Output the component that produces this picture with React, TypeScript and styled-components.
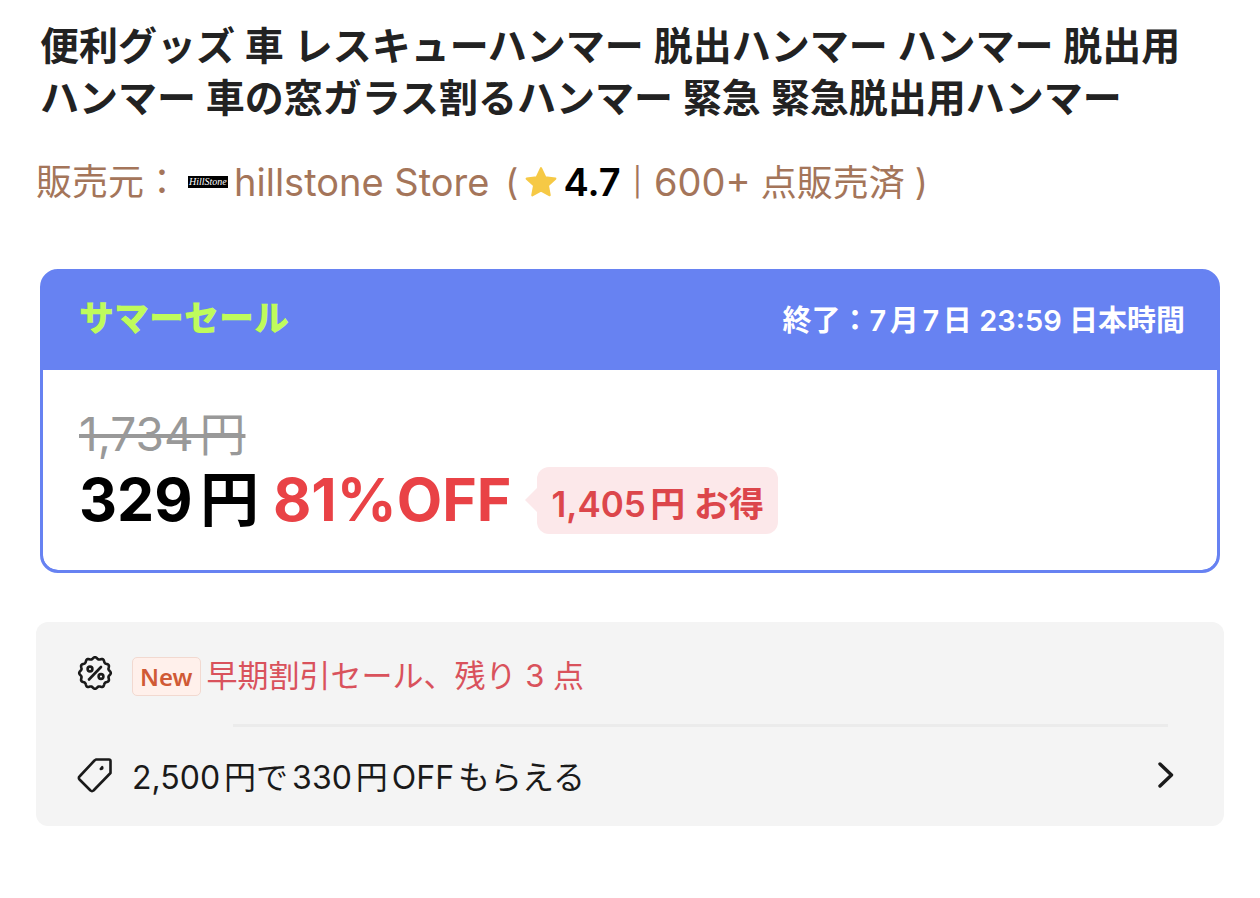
import React from "react";
import styled, { createGlobalStyle } from "styled-components";

const GlobalStyle = createGlobalStyle`
  * { box-sizing: border-box; }
  body {
    margin: 0;
    background: #fff;
    color: #000;
    font-family: Inter, "Noto Sans CJK JP", sans-serif;
    text-autospace: normal;
  }
`;

const Page = styled.main`
  padding: 20px 36px 72px;
`;

const Title = styled.h1`
  margin: 0 0 32px;
  padding: 0 16px 0 4px;
  font-size: 39px;
  line-height: 52px;
  font-weight: 600;
  color: #222;
`;

const Seller = styled.p`
  display: flex;
  align-items: center;
  height: 52px;
  margin: 0 0 61px;
  font-size: 36px;
  line-height: 52px;
  color: #a4755a;
  white-space: pre;
`;

const Latin = styled.span`
  font-size: 38px;
`;

const StoreLink = styled.a`
  display: flex;
  align-items: center;
  gap: 6px;
  margin: 0 16px 0 8px;
  color: inherit;
  text-decoration: none;
`;

const StoreLogo = styled.svg`
  width: 40px;
  height: 12px;
  font: italic 400 10px "Liberation Serif", serif;
`;

const Star = styled.svg`
  width: 34px;
  height: 34px;
  margin: 0 6px 0 5px;
`;

const Rating = styled.strong`
  font-size: 38px;
  font-weight: 600;
  color: #000;
`;

const Bar = styled.span`
  margin: 0 12px;
  font-size: 28px;
`;

const Sold = styled.span`
  margin-right: 10px;
`;

const SaleCard = styled.section`
  margin: 0 4px 49px;
  border: 3px solid #6782f2;
  border-radius: 18px;
  background: #6782f2;
  overflow: hidden;
`;

const SaleHeader = styled.header`
  display: flex;
  align-items: center;
  justify-content: space-between;
  padding: 19px 32px 24px 36px;
`;

const SaleName = styled.h2`
  margin: 0;
  font-size: 35px;
  line-height: 55px;
  font-weight: 800;
  color: #bffb5c;
`;

const SaleEnd = styled.time`
  padding-top: 4px;
  font-size: 29px;
  line-height: 51px;
  font-weight: 600;
  color: #fff;
`;

const SaleBody = styled.div`
  padding: 36px 36px 32px;
  border-radius: 0 0 15px 15px;
  background: #fff;
`;

const OldPrice = styled.del`
  display: block;
  width: max-content;
  font-size: 46px;
  line-height: 56px;
  color: #999;
`;

const PriceRow = styled.div`
  display: flex;
  align-items: center;
  gap: 14px;
  font-size: 59px;
  line-height: 76px;
  font-weight: 700;
`;

const Discount = styled.span`
  color: #e94246;
`;

const Saving = styled.span`
  position: relative;
  margin-left: 12px;
  padding: 12px 14px 4px;
  border-radius: 12px;
  background: #fce8ea;
  color: #dc464b;
  font-size: 35px;
  line-height: 51px;
  font-weight: 600;

  &::before {
    content: "";
    position: absolute;
    left: -12px;
    top: 21px;
    border: solid transparent;
    border-width: 12px 12px 12px 0;
    border-right-color: #fce8ea;
  }
`;

const Offers = styled.section`
  padding: 0 40px;
  border-radius: 12px;
  background: #f4f4f4;
  color: #1a1a1a;
`;

const OfferRow = styled.div`
  display: flex;
  align-items: center;
  height: 102px;
  font-size: 31px;
`;

const OfferIcon = styled.svg`
  width: 38px;
  height: 38px;
  margin-right: 18px;
  fill: none;
  stroke: #1a1a1a;
  stroke-width: 2.6;
  stroke-linecap: round;
  stroke-linejoin: round;
`;

const NewBadge = styled.span`
  margin: 6px 6px 0 0;
  padding: 0 7px;
  border: 1px solid #f2d9d0;
  border-radius: 5px;
  background: #fff0eb;
  color: #d05a35;
  font: 600 24px/37px "Noto Sans", sans-serif;
`;

const OfferText = styled.span`
  color: #d9525c;
`;

const Divider = styled.hr`
  margin: 0 16px 0 157px;
  border: 0;
  border-top: 3px solid #ebebeb;
`;

const OfferButton = styled.button`
  display: flex;
  align-items: center;
  width: 100%;
  height: 99px;
  padding: 0 0 3px;
  border: 0;
  background: none;
  color: inherit;
  font: inherit;
  font-size: 32px;
  text-align: left;
`;

const Chevron = styled.svg`
  width: 16px;
  height: 28px;
  margin: 0 10px 0 auto;
  fill: none;
  stroke: #1a1a1a;
  stroke-width: 3.4;
  stroke-linecap: round;
  stroke-linejoin: round;
`;

const badgePath =
  Array.from({ length: 144 }, (_, i) => {
    const a = (i / 144) * Math.PI * 2 - Math.PI / 2;
    const r = 14.9 + 0.9 * Math.cos((i / 12) * Math.PI * 2);
    const x = (19 + r * Math.cos(a)).toFixed(2);
    const y = (19 + r * Math.sin(a)).toFixed(2);
    return `${i === 0 ? "M" : "L"}${x} ${y}`;
  }).join("") + "Z";

export default function App() {
  return (
    <>
      <GlobalStyle />
      <Page>
        <Title>
          便利グッズ 車 レスキューハンマー 脱出ハンマー ハンマー 脱出用ハンマー 車の窓ガラス割るハンマー 緊急 緊急脱出用ハンマー
        </Title>
        <Seller>
          <span>販売元：</span>
          <StoreLink href="#store">
            <StoreLogo viewBox="0 0 40 12" aria-hidden="true">
              <rect width="40" height="12" fill="#000" />
              <text x="1" y="9" fill="#fff">HillStone</text>
            </StoreLogo>
            <Latin>hillstone Store</Latin>
          </StoreLink>
          <span>(</span>
          <Star viewBox="0 0 32 32" aria-hidden="true">
            <path
              d="M16 3l4 8.500 9.500 1.300-7 6.500 1.700 9.200L16 24l-8.200 4.500 1.700-9.200-7-6.500L12 11.500z"
              fill="#f6c945"
              stroke="#f6c945"
              strokeWidth="2"
              strokeLinejoin="round"
            />
          </Star>
          <Rating>4.7</Rating>
          <Bar>|</Bar>
          <Sold>
            <Latin>600+</Latin> 点販売済
          </Sold>
          <span>)</span>
        </Seller>

        <SaleCard>
          <SaleHeader>
            <SaleName>サマーセール</SaleName>
            <SaleEnd>終了：7月7日 23:59 日本時間</SaleEnd>
          </SaleHeader>
          <SaleBody>
            <OldPrice>1,734円</OldPrice>
            <PriceRow>
              <span>329円</span>
              <Discount>81%OFF</Discount>
              <Saving>1,405円 お得</Saving>
            </PriceRow>
          </SaleBody>
        </SaleCard>

        <Offers>
          <OfferRow>
            <OfferIcon viewBox="0 0 38 38" aria-hidden="true">
              <path d={badgePath} />
              <path d="M25 13L13 25.500" />
              <circle cx="14" cy="15" r="2.400" />
              <circle cx="25" cy="22.500" r="2.400" />
            </OfferIcon>
            <NewBadge>New</NewBadge>
            <OfferText>早期割引セール、残り 3 点</OfferText>
          </OfferRow>
          <Divider />
          <OfferButton type="button">
            <OfferIcon viewBox="0 0 38 38" aria-hidden="true">
              <path d="M20 3.500H33a1.500 1.500 0 0 1 1.500 1.500V17L17.500 34.500a2 2 0 0 1-3 0L3.500 23.500a2 2 0 0 1 0-3L18.500 4.500z" />
              <path d="M24.800 13l1.400-1.800v1.400z" />
            </OfferIcon>
            <span>2,500円で330円OFFもらえる</span>
            <Chevron viewBox="0 0 16 28" aria-hidden="true">
              <path d="M2 3l11.500 11L2 25" />
            </Chevron>
          </OfferButton>
        </Offers>
      </Page>
    </>
  );
}
